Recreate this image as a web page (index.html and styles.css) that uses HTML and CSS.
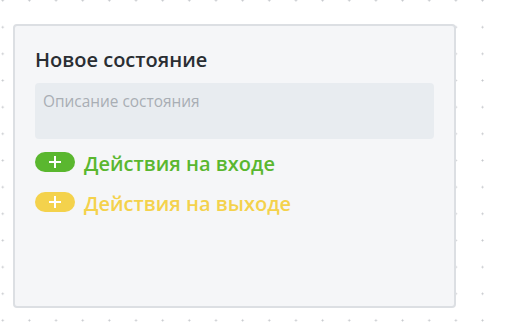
FILE: index.html
```html
<!DOCTYPE html>
<html lang="en">
<head>
    <meta charset="UTF-8">
    <meta name="viewport" content="width=device-width, initial-scale=1.0">
    <title>Новое состояние</title>
    <link rel="stylesheet" href="styles.css">
</head>
<body>
    <div id="canvas">
        <div class="state-card">
            <div class="state-title">Новое состояние</div>
            <textarea class="state-desc" placeholder="Описание состояния"></textarea>
            <div class="action-row entry">
                <span class="add-pill"><svg width="14" height="14" viewBox="0 0 14 14"><path d="M7 1v12M1 7h12" stroke="#fff" stroke-width="2"/></svg></span>
                <span class="action-label">Действия на входе</span>
            </div>
            <div class="action-row exit">
                <span class="add-pill"><svg width="14" height="14" viewBox="0 0 14 14"><path d="M7 1v12M1 7h12" stroke="#fff" stroke-width="2"/></svg></span>
                <span class="action-label">Действия на выходе</span>
            </div>
        </div>
    </div>
</body>
</html>
```

FILE: styles.css
```css
body {
    margin: 0;
    padding: 0;
    font-family: "Open Sans", "Liberation Sans", sans-serif;
}
#canvas {
    width: 505px;
    height: 322px;
    overflow: hidden;
    padding: 24px 0 0 13px;
    box-sizing: border-box;
    background-color: #ffffff;
    background-image: radial-gradient(circle, #c4c7cb 0.9px, transparent 1.1px);
    background-size: 26.667px 26.667px;
    background-position: -10.6px -12.8px;
}
.state-card {
    width: 443px;
    height: 284px;
    box-sizing: border-box;
    border: 2px solid #dcdfe3;
    border-radius: 4px;
    background-color: #f5f6f8;
    padding: 20px;
    display: flex;
    flex-direction: column;
}
.state-title {
    font-size: 20px;
    font-weight: 600;
    color: #2a2e33;
}
.state-desc {
    margin-top: 10px;
    height: 56px;
    border: none;
    border-radius: 4px;
    background-color: #e8ecf0;
    padding: 8px 8px;
    box-sizing: border-box;
    resize: none;
    font-family: inherit;
    font-size: 15.4px;
    outline: none;
}
.state-desc::placeholder {
    color: #a8aeb4;
}
.action-row {
    display: flex;
    align-items: center;
    gap: 9px;
    height: 20px;
}
.action-row.entry {
    margin-top: 13px;
    color: #5ab72f;
}
.action-row.exit {
    margin-top: 20px;
    color: #f4d24c;
}
.add-pill {
    flex: none;
    width: 40px;
    height: 20px;
    border-radius: 10px;
    display: flex;
    align-items: center;
    justify-content: center;
}
.entry .add-pill {
    background-color: #5ab72f;
}
.exit .add-pill {
    background-color: #f4d24c;
}
.action-label {
    font-size: 20px;
    font-weight: 600;
    line-height: 20px;
    padding-top: 3px;
}
```
